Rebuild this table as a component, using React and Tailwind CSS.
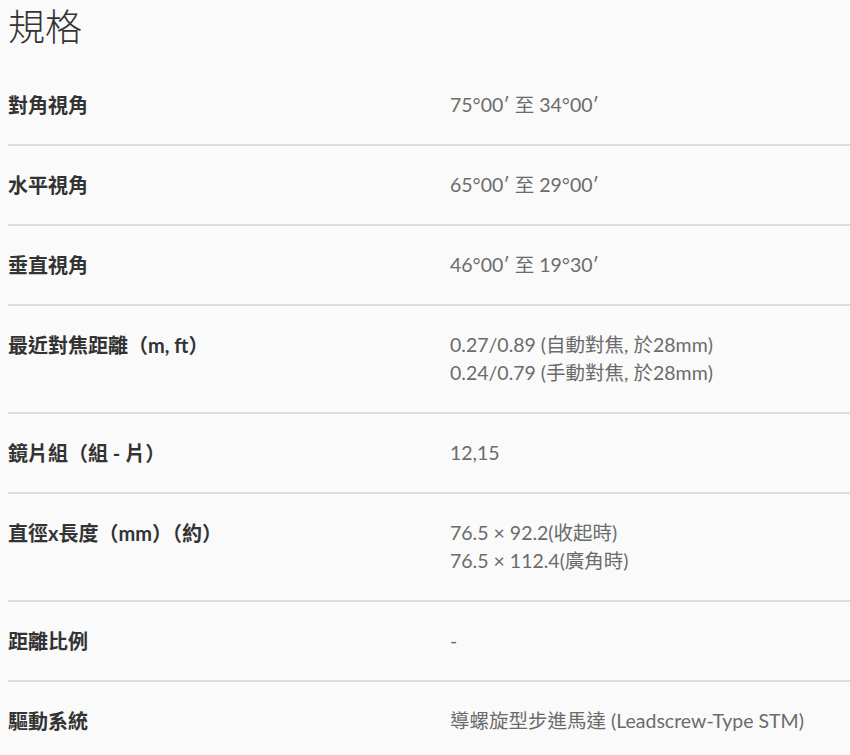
const specs = [
  { label: "對角視角", value: ["75°00′ 至 34°00′"] },
  { label: "水平視角", value: ["65°00′ 至 29°00′"] },
  { label: "垂直視角", value: ["46°00′ 至 19°30′"] },
  {
    label: "最近對焦距離（m, ft）",
    value: ["0.27/0.89 (自動對焦, 於28mm)", "0.24/0.79 (手動對焦, 於28mm)"],
  },
  { label: "鏡片組（組 - 片）", value: ["12,15"] },
  {
    label: "直徑x長度（mm）（約）",
    value: ["76.5 × 92.2(收起時)", "76.5 × 112.4(廣角時)"],
  },
  { label: "距離比例", value: ["-"] },
  { label: "驅動系統", value: ["導螺旋型步進馬達 (Leadscrew-Type STM)"] },
];

export default function App() {
  return (
    <div
      className="min-h-screen bg-[#fafafa] pl-2"
      style={{ fontFamily: 'Lato, "Noto Sans CJK TC", sans-serif' }}
    >
      {/* Title */}
      <h1 className="h-[66px] text-[37px] leading-[54px] font-light text-[#333]">
        規格
      </h1>

      {/* Spec rows */}
      <div>
        {specs.map((row, i) => (
          <div
            key={row.label}
            className={
              i < specs.length - 1
                ? "grid grid-cols-[442px_1fr] pt-[25px] pb-[25px] border-b-2 border-[#dddddd]"
                : "grid grid-cols-[442px_1fr] pt-[25px] pb-[25px]"
            }
          >
            <div className="text-[20px] leading-[28px] font-bold text-[#333]">
              {row.label}
            </div>
            <div className="text-[19.5px] leading-[28px] text-[#6b6b6b]">
              {row.value.map((line) => (
                <p key={line}>{line}</p>
              ))}
            </div>
          </div>
        ))}
      </div>
    </div>
  );
}
